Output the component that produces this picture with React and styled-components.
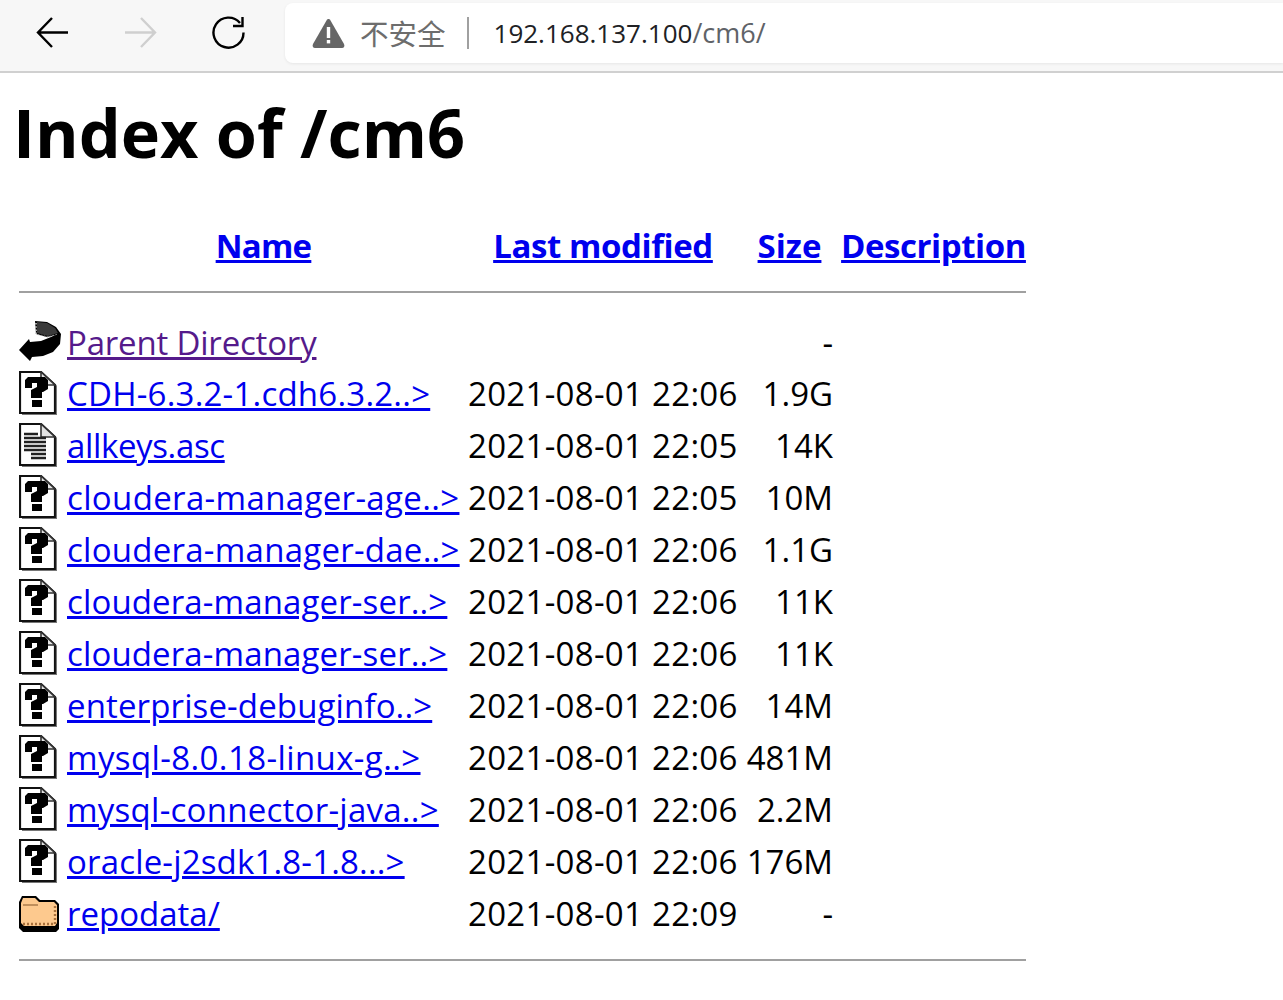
import React from 'react'
import styled, { createGlobalStyle } from 'styled-components'

const FONT = `"Open Sans", "Noto Sans", "Noto Sans CJK SC", sans-serif`

const Global = createGlobalStyle`
  html, body { margin: 0; padding: 0; background: #fff; }
  body { font-family: ${FONT}; color: #000; }
`

const rows = [
  { icon: 'back', name: 'Parent Directory', track: -0.19, date: '', size: '-', visited: true },
  { icon: 'unknown', name: 'CDH-6.3.2-1.cdh6.3.2..>', track: 0.22, date: '2021-08-01 22:06', size: '1.9G' },
  { icon: 'text', name: 'allkeys.asc', track: -0.36, date: '2021-08-01 22:05', size: '14K' },
  { icon: 'unknown', name: 'cloudera-manager-age..>', track: 0.35, date: '2021-08-01 22:05', size: '10M' },
  { icon: 'unknown', name: 'cloudera-manager-dae..>', track: 0.26, date: '2021-08-01 22:06', size: '1.1G' },
  { icon: 'unknown', name: 'cloudera-manager-ser..>', track: 0.13, date: '2021-08-01 22:06', size: '11K' },
  { icon: 'unknown', name: 'cloudera-manager-ser..>', track: 0.13, date: '2021-08-01 22:06', size: '11K' },
  { icon: 'unknown', name: 'enterprise-debuginfo..>', track: 0.13, date: '2021-08-01 22:06', size: '14M' },
  { icon: 'unknown', name: 'mysql-8.0.18-linux-g..>', track: 0.39, date: '2021-08-01 22:06', size: '481M' },
  { icon: 'unknown', name: 'mysql-connector-java..>', track: 0.26, date: '2021-08-01 22:06', size: '2.2M' },
  { icon: 'unknown', name: 'oracle-j2sdk1.8-1.8...>', track: 0.17, date: '2021-08-01 22:06', size: '176M' },
  { icon: 'folder', name: 'repodata/', track: 0, date: '2021-08-01 22:09', size: '-' },
]

const ListIcon = styled.svg`
  display: block;
  margin-top: ${p => p.$top}px;
  filter: blur(0.5px);
`

const BackIcon = () => (
  <ListIcon $top={-2} width="42" height="42" viewBox="4 4 42 42">
    <path d="M20 4 L32 5 L41 10 L46 17 L45 27 L38 35 L28 39 L17 40 L15 44 L4 33 L14 22 L15 25 L26 24 L36 20 L40 18 L32 20 L21 17 Z" fill="#000" />
    <path d="M22 5 L32 6 L40 11 L43 16 L33 19 L22 16 Z" fill="#3a3a3a" />
    <path d="M21 6 V17" stroke="#ccc" strokeWidth="1.6" strokeDasharray="1.6 1.6" />
    <path d="M23 17.5 L33 20 L43 17" fill="none" stroke="#999" strokeWidth="1" strokeDasharray="1.5 1.5" />
  </ListIcon>
)

const SheetOutline = () => (
  <>
    <path d="M5 4 H26 L40 17 V45 H5 Z" fill="#fff" stroke="#111" strokeWidth="2.2" />
    <path d="M26 4 V17 H40 Z" fill="#e4e4e4" stroke="#333" strokeWidth="1.6" />
    <path d="M41.5 18 V46.5 H7" fill="none" stroke="#777" strokeWidth="1.2" />
  </>
)

const UnknownIcon = () => (
  <ListIcon $top={-3} width="38" height="44" viewBox="4 3 38 44">
    <SheetOutline />
    <path d="M10 20 V12 L13 9 H30 L33 12 V21 L28 24 H27 V30 H16 V22 L22 19 V15 H17 V20 Z" fill="#000" />
    <rect x="17" y="32" width="10" height="7" fill="#000" />
  </ListIcon>
)

const TextIcon = () => (
  <ListIcon $top={-3} width="38" height="44" viewBox="4 3 38 44">
    <SheetOutline />
    <path d="M9 14 H23 M9 18 H31 M9 22 H31 M9 26 H31 M9 30 H31 M16 34 H31 M16 38 H31" stroke="#222" strokeWidth="2.6" />
  </ListIcon>
)

const FolderIcon = () => (
  <ListIcon $top={-1} width="41" height="38" viewBox="4 4 41 38">
    <path d="M4 11 L7 5 H21 L25 9 H40 L44 13 V38 L41 41 H8 L4 37 Z" fill="#000" />
    <path d="M6 12 L8 7 H20 L24 11 H39 L42 14 V32 L40 35 H9 L6 32 Z" fill="#fdc98e" />
    <path d="M8 14 H23" stroke="#c08f5c" strokeWidth="2" />
    <path d="M8 33 H40 V15" fill="none" stroke="#a8703c" strokeWidth="2.4" strokeDasharray="2 2" />
  </ListIcon>
)

const icons = { back: BackIcon, unknown: UnknownIcon, text: TextIcon, folder: FolderIcon }

const Toolbar = styled.header`
  height: 71px;
  background: #f7f7f7;
  border-bottom: 2px solid #d0d0d0;
  display: flex;
  align-items: flex-start;
  box-sizing: content-box;
`

const NavIcons = styled.div`
  width: 285px;
  height: 65px;
  flex: none;
  display: flex;
  align-items: center;
  padding-left: 36px;
  gap: 55px;
  box-sizing: border-box;
`

const NavIcon = styled.svg`
  width: 33px;
  height: 33px;
  flex: none;
  color: ${p => (p.$dim ? '#cfcfcf' : '#000')};
`

const AddressBar = styled.div`
  flex: 1;
  margin-top: 3px;
  height: 60px;
  background: #fff;
  border-radius: 8px 0 0 8px;
  box-shadow: 0 1px 3px rgba(0, 0, 0, 0.07);
  display: flex;
  align-items: center;
  padding-left: 27px;
  font-size: 27px;
  line-height: 58px;
  color: #5f6368;
`

const Warning = styled.svg`
  width: 33px;
  height: 30px;
  flex: none;
  margin-right: 15px;
`

const Insecure = styled.span`
  font-family: "Noto Sans CJK SC", sans-serif;
  font-size: 28.5px;
  color: #6d6d6d;
`

const Divider = styled.span`
  width: 2px;
  height: 32px;
  margin: 0 25px 0 21px;
  background: #a0a0a0;
`

const Host = styled.span`
  font-size: 26px;
  color: #202124;
`

const Page = styled.main`
  padding: 0 0 0 19px;
`

const Title = styled.h1`
  margin: 0 0 0 -6px;
  padding-top: 19px;
  height: 122px;
  box-sizing: border-box;
  font-size: 66.5px;
  line-height: 80px;
  font-weight: 700;
`

const Listing = styled.table`
  border-collapse: collapse;
  table-layout: fixed;
  width: 1007px;
  font-size: 33px;
`

const HeadCell = styled.th`
  box-sizing: border-box;
  height: 96px;
  padding: 4px ${p => p.$right || 0}px 0 ${p => p.$left || 0}px;
  font-weight: 700;
  text-align: center;
  font-size: 33px;
  vertical-align: middle;
`

const Cell = styled.td`
  padding: 0;
  height: ${p => (p.$short ? 51 : 52)}px;
  line-height: ${p => (p.$short ? 51 : 52)}px;
  white-space: nowrap;
  text-align: ${p => (p.$right ? 'right' : 'left')};
  letter-spacing: ${p => p.$track || 0}px;
`

const IconCell = styled.td`
  padding: 0;
  vertical-align: middle;
`

const FileLink = styled.a`
  color: ${p => (p.$visited ? '#551a8b' : '#0000ee')};
  text-decoration: underline;
  letter-spacing: ${p => p.$track || 0}px;
`

const RuleCell = styled.td`
  padding: 0;
  height: ${p => p.$h}px;
  vertical-align: ${p => p.$align};
`

const Rule = styled.hr`
  margin: 0;
  border: 0;
  height: 2px;
  background: #a0a0a0;
`

const App = () => (
  <>
    <Global />
    <Toolbar>
      <NavIcons>
        <NavIcon viewBox="0 0 33 33" fill="none" stroke="currentColor" strokeWidth="2.4">
          <path d="M32 16.5 H2 M16 2 L2 16.5 L16 31" />
        </NavIcon>
        <NavIcon $dim viewBox="0 0 33 33" fill="none" stroke="currentColor" strokeWidth="2.4">
          <path d="M1 16.5 H31 M17 2 L31 16.5 L17 31" />
        </NavIcon>
        <NavIcon viewBox="0 0 33 33" fill="none" stroke="currentColor" strokeWidth="2.4">
          <path d="M28 7 A15 15 0 1 0 31.5 16.5" />
          <path d="M30.5 1 V10 H21" />
        </NavIcon>
      </NavIcons>
      <AddressBar>
        <Warning viewBox="0 0 33 30">
          <path d="M16.5 1 C17.5 1 18 1.6 18.5 2.4 L32 26 C33 28 32 30 30 30 H3 C1 30 0 28 1 26 L14.5 2.4 C15 1.6 15.5 1 16.5 1 Z" fill="#666" />
          <rect x="14.8" y="9" width="3.4" height="11" fill="#fff" />
          <rect x="14.8" y="22" width="3.4" height="3.4" fill="#fff" />
        </Warning>
        <Insecure>不安全</Insecure>
        <Divider />
        <Host>192.168.137.100</Host>
        <span>/cm6/</span>
      </AddressBar>
    </Toolbar>
    <Page>
      <Title>Index of /cm6</Title>
      <Listing>
        <colgroup>
          <col style={{ width: 48 }} />
          <col style={{ width: 401 }} />
          <col style={{ width: 278 }} />
          <col style={{ width: 87 }} />
          <col style={{ width: 193 }} />
        </colgroup>
        <thead>
          <tr>
            <HeadCell />
            <HeadCell $right={8}><FileLink href="#" $track={-0.75}>Name</FileLink></HeadCell>
            <HeadCell $right={8}><FileLink href="#" $track={-0.4}>Last modified</FileLink></HeadCell>
            <HeadCell><FileLink href="#">Size</FileLink></HeadCell>
            <HeadCell $left={8}><FileLink href="#" $track={-0.45}>Description</FileLink></HeadCell>
          </tr>
          <tr>
            <RuleCell colSpan={5} $h={26} $align="top"><Rule /></RuleCell>
          </tr>
        </thead>
        <tbody>
          {rows.map((row, i) => {
            const Icon = icons[row.icon]
            return (
              <tr key={i}>
                <IconCell><Icon /></IconCell>
                <Cell $short={i === 0}><FileLink href="#" $visited={row.visited} $track={row.track}>{row.name}</FileLink></Cell>
                <Cell $short={i === 0} $track={0.3}>{row.date}</Cell>
                <Cell $short={i === 0} $right>{row.size}</Cell>
                <Cell $short={i === 0} />
              </tr>
            )
          })}
          <tr>
            <RuleCell colSpan={5} $h={21} $align="bottom"><Rule /></RuleCell>
          </tr>
        </tbody>
      </Listing>
    </Page>
  </>
)

export default App
